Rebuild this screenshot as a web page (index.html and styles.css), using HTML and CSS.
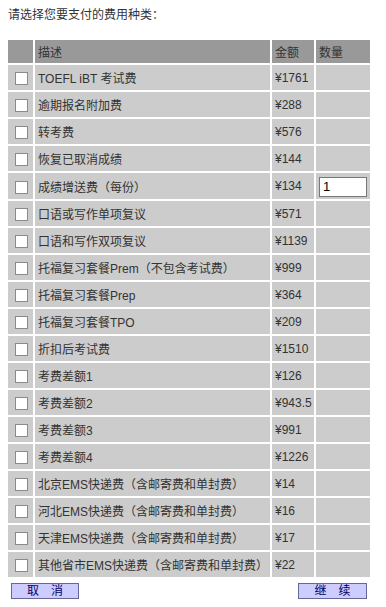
FILE: index.html
```html
<!DOCTYPE html>
<html lang="zh">
<head>
<meta charset="utf-8">
<title>费用种类</title>
<link rel="stylesheet" href="styles.css">
</head>
<body>
<div class="page">
  <p class="title">请选择您要支付的费用种类：</p>
  <table class="fees">
    <colgroup>
      <col class="c-check"><col class="c-desc"><col class="c-amt"><col class="c-qty">
    </colgroup>
    <thead>
      <tr><th></th><th>描述</th><th>金额</th><th>数量</th></tr>
    </thead>
    <tbody>
      <tr><td class="chk"><input type="checkbox" class="box"></td><td>TOEFL iBT 考试费</td><td>¥1761</td><td></td></tr>
      <tr><td class="chk"><input type="checkbox" class="box"></td><td>逾期报名附加费</td><td>¥288</td><td></td></tr>
      <tr><td class="chk"><input type="checkbox" class="box"></td><td>转考费</td><td>¥576</td><td></td></tr>
      <tr><td class="chk"><input type="checkbox" class="box"></td><td>恢复已取消成绩</td><td>¥144</td><td></td></tr>
      <tr class="tall"><td class="chk"><input type="checkbox" class="box"></td><td>成绩增送费（每份）</td><td>¥134</td><td class="qty"><input type="text" class="num" value="1"></td></tr>
      <tr><td class="chk"><input type="checkbox" class="box"></td><td>口语或写作单项复议</td><td>¥571</td><td></td></tr>
      <tr><td class="chk"><input type="checkbox" class="box"></td><td>口语和写作双项复议</td><td>¥1139</td><td></td></tr>
      <tr><td class="chk"><input type="checkbox" class="box"></td><td>托福复习套餐Prem（不包含考试费）</td><td>¥999</td><td></td></tr>
      <tr><td class="chk"><input type="checkbox" class="box"></td><td>托福复习套餐Prep</td><td>¥364</td><td></td></tr>
      <tr><td class="chk"><input type="checkbox" class="box"></td><td>托福复习套餐TPO</td><td>¥209</td><td></td></tr>
      <tr><td class="chk"><input type="checkbox" class="box"></td><td>折扣后考试费</td><td>¥1510</td><td></td></tr>
      <tr><td class="chk"><input type="checkbox" class="box"></td><td>考费差额1</td><td>¥126</td><td></td></tr>
      <tr><td class="chk"><input type="checkbox" class="box"></td><td>考费差额2</td><td>¥943.5</td><td></td></tr>
      <tr><td class="chk"><input type="checkbox" class="box"></td><td>考费差额3</td><td>¥991</td><td></td></tr>
      <tr><td class="chk"><input type="checkbox" class="box"></td><td>考费差额4</td><td>¥1226</td><td></td></tr>
      <tr><td class="chk"><input type="checkbox" class="box"></td><td>北京EMS快递费（含邮寄费和单封费）</td><td>¥14</td><td></td></tr>
      <tr><td class="chk"><input type="checkbox" class="box"></td><td>河北EMS快递费（含邮寄费和单封费）</td><td>¥16</td><td></td></tr>
      <tr><td class="chk"><input type="checkbox" class="box"></td><td>天津EMS快递费（含邮寄费和单封费）</td><td>¥17</td><td></td></tr>
      <tr><td class="chk"><input type="checkbox" class="box"></td><td>其他省市EMS快递费（含邮寄费和单封费）</td><td>¥22</td><td></td></tr>
    </tbody>
  </table>
  <div class="actions">
    <button type="button" class="btn">取　消</button>
    <button type="button" class="btn">继　续</button>
  </div>
</div>
</body>
</html>
```
FILE: styles.css
```css
html, body {
  margin: 0;
  padding: 0;
  background: #ffffff;
}
body {
  font-family: "Liberation Sans", Arial, "Noto Sans CJK SC", sans-serif;
  font-size: 12px;
  color: #333333;
}
.page {
  padding: 8px 14px 0 6px;
}
.title {
  margin: 0 0 16px 2px;
  line-height: 14px;
  color: #333333;
}
.fees {
  border-collapse: separate;
  border-spacing: 2px;
  table-layout: fixed;
  width: 366px;
}
.c-check { width: 25px; }
.c-desc { width: 235px; }
.c-amt { width: 42px; }
.c-qty { width: 54px; }
.fees th {
  background: #999999;
  height: 23px;
  padding: 0 0 0 3px;
  text-align: left;
  font-weight: normal;
  color: #333333;
}
.fees td {
  background: #cccccc;
  height: 25px;
  padding: 0 0 0 3px;
  white-space: nowrap;
  color: #333333;
}
.fees tr.tall td {
  height: 26px;
}
.fees td.chk {
  padding: 0;
  text-align: center;
}
.box {
  appearance: none;
  -webkit-appearance: none;
  width: 13px;
  height: 13px;
  margin: 2px 0 0 1px;
  background: #ffffff;
  border: 1px solid #8a8a8a;
  vertical-align: middle;
  display: inline-block;
  box-sizing: border-box;
}
.fees td.qty {
  padding: 0 0 0 3px;
}
.num {
  width: 48px;
  height: 20px;
  box-sizing: border-box;
  margin: 1px 0 0 0;
  padding: 0 3px;
  border: 1px solid #777777;
  background: #ffffff;
  font-family: "Liberation Sans", Arial, sans-serif;
  font-size: 13px;
  color: #000000;
  vertical-align: middle;
}
.actions {
  display: flex;
  justify-content: space-between;
  padding: 4px 5px 0 5px;
  width: 356px;
}
.btn {
  width: 68px;
  height: 16px;
  padding: 0;
  margin: 0;
  background: #ccccff;
  border: 1px solid #666699;
  color: #000066;
  font-family: "Liberation Sans", "Noto Sans CJK SC", sans-serif;
  font-size: 12px;
  line-height: 14px;
}
.btn + .btn {
  width: 69px;
}
```
